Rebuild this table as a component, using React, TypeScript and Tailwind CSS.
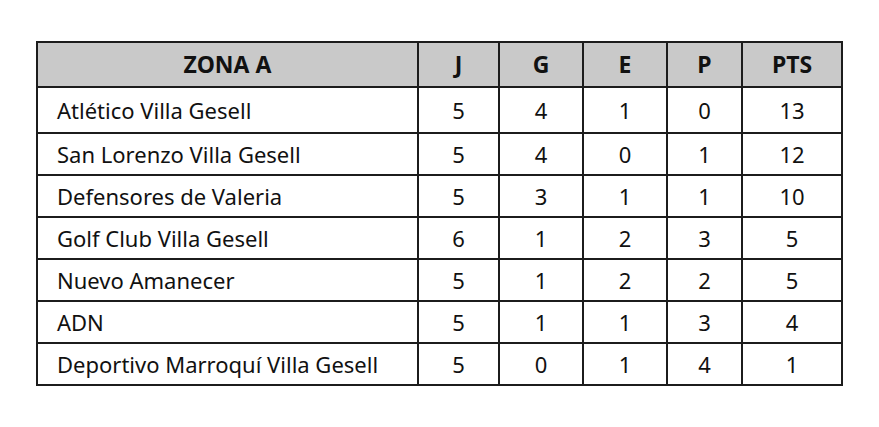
const rows = [
  { team: 'Atlético Villa Gesell', j: 5, g: 4, e: 1, p: 0, pts: 13 },
  { team: 'San Lorenzo Villa Gesell', j: 5, g: 4, e: 0, p: 1, pts: 12 },
  { team: 'Defensores de Valeria', j: 5, g: 3, e: 1, p: 1, pts: 10 },
  { team: 'Golf Club Villa Gesell', j: 6, g: 1, e: 2, p: 3, pts: 5 },
  { team: 'Nuevo Amanecer', j: 5, g: 1, e: 2, p: 2, pts: 5 },
  { team: 'ADN', j: 5, g: 1, e: 1, p: 3, pts: 4 },
  { team: 'Deportivo Marroquí Villa Gesell', j: 5, g: 0, e: 1, p: 4, pts: 1 },
];

export default function App() {
  return (
    <div className="w-[879px] h-[427px] bg-white pt-[41px] pl-[36px] font-['Noto_Sans',sans-serif] text-[#111]">
      <table className="border-collapse border-2 border-[#1c1c1c] table-fixed">
        <colgroup>
          <col className="w-[381px]" />
          <col className="w-[81px]" />
          <col className="w-[84px]" />
          <col className="w-[84px]" />
          <col className="w-[75px]" />
          <col className="w-[100px]" />
        </colgroup>
        <thead>
          <tr className="h-[45px] bg-[#c9c9c9] text-[23px] font-bold leading-none">
            <th className="border-2 border-[#1c1c1c] text-center">ZONA A</th>
            <th className="border-2 border-[#1c1c1c] text-center">J</th>
            <th className="border-2 border-[#1c1c1c] text-center">G</th>
            <th className="border-2 border-[#1c1c1c] text-center">E</th>
            <th className="border-2 border-[#1c1c1c] text-center">P</th>
            <th className="border-2 border-[#1c1c1c] text-center">PTS</th>
          </tr>
        </thead>
        <tbody className="text-[22px] leading-none">
          {rows.map((r, i) => (
            <tr key={r.team} className={i === 0 ? 'h-[46px]' : 'h-[42px]'}>
              <td className="border-2 border-[#1c1c1c] pl-[19px]">{r.team}</td>
              <td className="border-2 border-[#1c1c1c] text-center">{r.j}</td>
              <td className="border-2 border-[#1c1c1c] text-center">{r.g}</td>
              <td className="border-2 border-[#1c1c1c] text-center">{r.e}</td>
              <td className="border-2 border-[#1c1c1c] text-center">{r.p}</td>
              <td className="border-2 border-[#1c1c1c] text-center">{r.pts}</td>
            </tr>
          ))}
        </tbody>
      </table>
    </div>
  );
}
